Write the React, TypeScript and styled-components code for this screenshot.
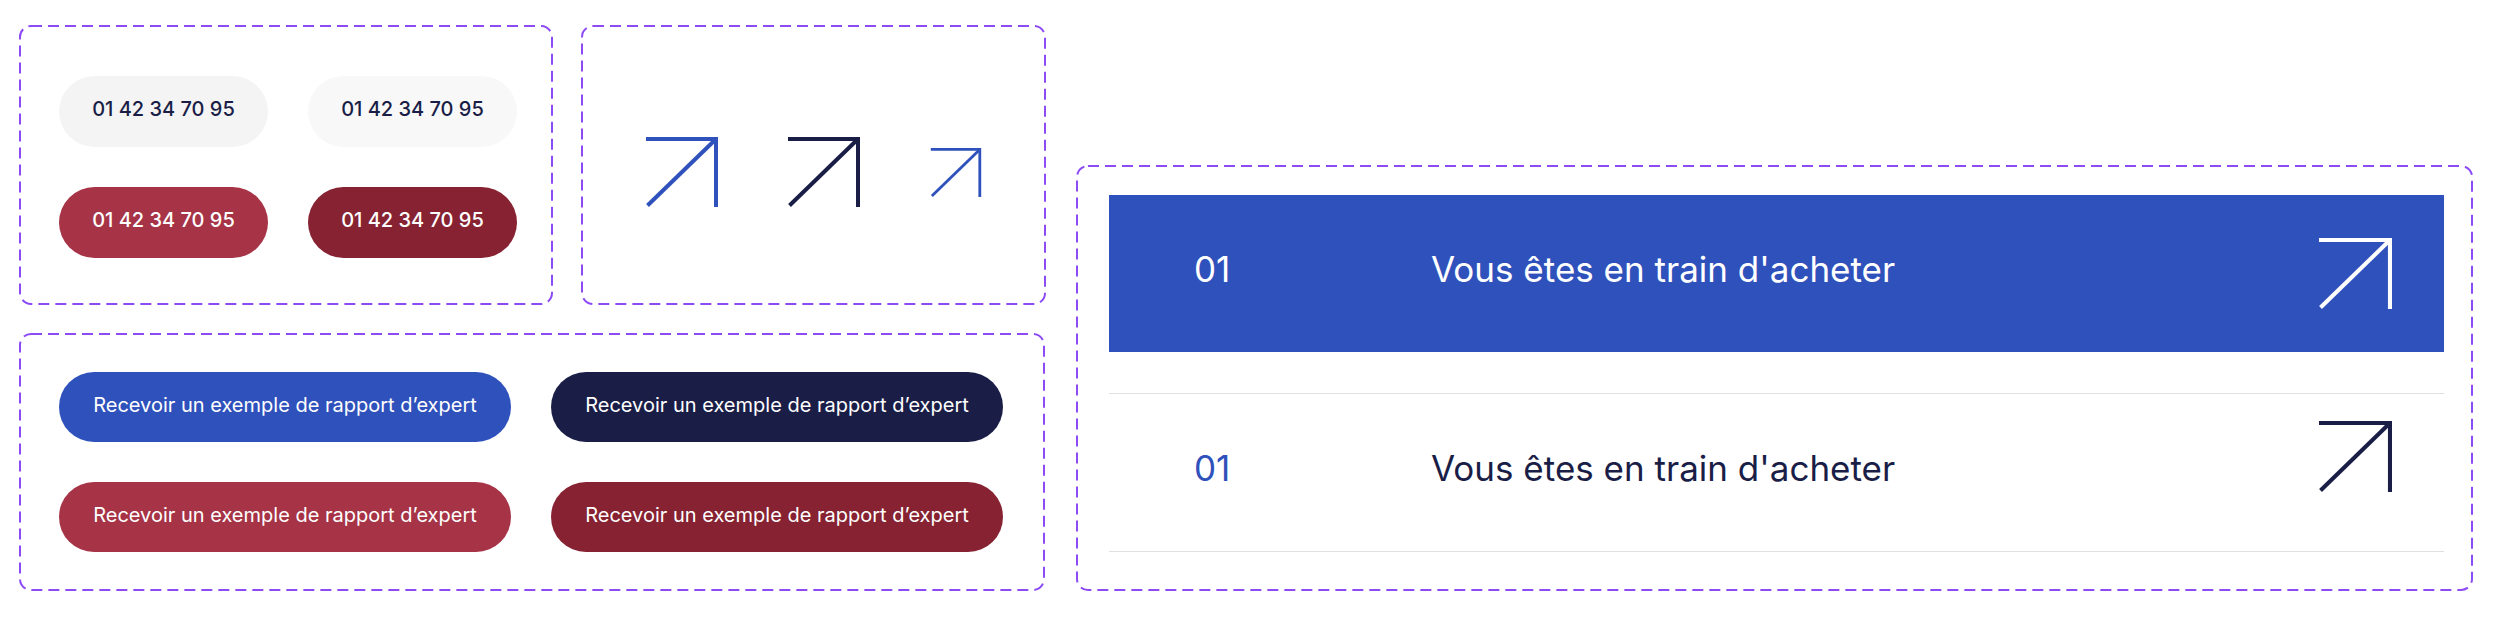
import styled, { createGlobalStyle } from "styled-components";
import type { ReactNode } from "react";

const GlobalStyle = createGlobalStyle`
  body {
    margin: 0;
    background: #ffffff;
    font-family: Inter, "Liberation Sans", sans-serif;
  }
`;

const blue = "#2f51bb";
const navy = "#1a1e47";
const red = "#a63346";
const darkRed = "#862231";

type ArrowProps = { width: number; height: number; color: string };

const ArrowIcon = ({ width, height, color }: ArrowProps) => (
  <svg width={width} height={height} viewBox="0 0 72 70" fill="none">
    <path d="M0 2H70V70" stroke={color} strokeWidth={4} strokeLinejoin="miter" />
    <path d="M1.5 68.5L70 2" stroke={color} strokeWidth={4} />
  </svg>
);

// figma-like dashed outline (css dashes are too short)
const DashedOutline = ({ w, h }: { w: number; h: number }) => (
  <OutlineSvg width={w} height={h}>
    <rect
      x={1}
      y={1}
      width={w - 2}
      height={h - 2}
      rx={11}
      fill="none"
      stroke="#8d4bf6"
      strokeWidth={2}
      strokeDasharray="11 6"
    />
  </OutlineSvg>
);

type FrameProps = { w: number; h: number; children: ReactNode };

const withOutline =
  (Box: typeof Frame) =>
  ({ w, h, children }: FrameProps) => (
    <Box $w={w} $h={h}>
      <DashedOutline w={w} h={h} />
      {children}
    </Box>
  );

export default function App() {
  const phones = [
    { bg: "#f4f4f4", fg: navy },
    { bg: "#f8f8f8", fg: navy },
    { bg: red, fg: "#ffffff" },
    { bg: darkRed, fg: "#ffffff" },
  ];
  const ctas = [blue, navy, red, darkRed];

  return (
    <>
      <GlobalStyle />
      <Page>
        <LeftColumn>
          <TopRow>
            <PhoneBox w={534} h={280}>
              {phones.map((p, i) => (
                <PhoneButton key={i} $bg={p.bg} $fg={p.fg}>
                  01 42 34 70 95
                </PhoneButton>
              ))}
            </PhoneBox>
            <ArrowBox w={465} h={280}>
              <ArrowIcon width={72} height={70} color={blue} />
              <ArrowIcon width={72} height={70} color={navy} />
              <ArrowIcon width={52} height={49} color={blue} />
            </ArrowBox>
          </TopRow>
          <CtaBox w={1026} h={258}>
            {ctas.map((c, i) => (
              <CtaButton key={i} $bg={c}>
                Recevoir un exemple de rapport d’expert
              </CtaButton>
            ))}
          </CtaBox>
        </LeftColumn>

        <ListBox w={1397} h={426}>
          <Row $active>
            <Num $active>01</Num>
            <Label $active>Vous êtes en train d'acheter</Label>
            <RowArrow $active>
              <ArrowIcon width={73} height={71} color="#ffffff" />
            </RowArrow>
          </Row>
          <Row>
            <Num>01</Num>
            <Label>Vous êtes en train d'acheter</Label>
            <RowArrow>
              <ArrowIcon width={73} height={71} color={navy} />
            </RowArrow>
          </Row>
        </ListBox>
      </Page>
    </>
  );
}

const Page = styled.div`
  display: flex;
  align-items: flex-end;
  gap: 30px;
  padding: 25px 0 0 19px;
`;

const LeftColumn = styled.div`
  display: flex;
  flex-direction: column;
  gap: 28px;
`;

const TopRow = styled.div`
  display: flex;
  gap: 28px;
`;

const Frame = styled.div<{ $w: number; $h: number }>`
  position: relative;
  box-sizing: border-box;
  width: ${(p) => p.$w}px;
  height: ${(p) => p.$h}px;
  border: 2px solid transparent;
`;

const OutlineSvg = styled.svg`
  position: absolute;
  left: -2px;
  top: -2px;
  pointer-events: none;
`;

const PhoneFrame = styled(Frame)`
  display: grid;
  grid-template-columns: 209px 209px;
  grid-auto-rows: 71px;
  gap: 40px;
  align-content: start;
  padding: 49px 0 0 38px;
`;

const ArrowFrame = styled(Frame)`
  display: flex;
  align-items: center;
  justify-content: center;
  gap: 70px;
  padding-top: 14px;
`;

const CtaFrame = styled(Frame)`
  display: grid;
  grid-template-columns: 452px 452px;
  grid-auto-rows: 70px;
  gap: 40px;
  padding: 37px 0 0 38px;
`;

const ListFrame = styled(Frame)`
  padding: 28px 27px 37px 31px;
  display: flex;
  flex-direction: column;
`;

const PhoneBox = withOutline(PhoneFrame);
const ArrowBox = withOutline(ArrowFrame);
const CtaBox = withOutline(CtaFrame);
const ListBox = withOutline(ListFrame);

const PhoneButton = styled.div<{ $bg: string; $fg: string }>`
  display: flex;
  align-items: center;
  justify-content: center;
  padding-bottom: 5px;
  box-sizing: border-box;
  border-radius: 36px;
  background: ${(p) => p.$bg};
  color: ${(p) => p.$fg};
  font-size: 20px;
  font-weight: 500;
`;

const CtaButton = styled.div<{ $bg: string }>`
  display: flex;
  align-items: center;
  justify-content: center;
  padding-bottom: 4px;
  box-sizing: border-box;
  border-radius: 35px;
  background: ${(p) => p.$bg};
  color: #ffffff;
  font-size: 20px;
`;

const Row = styled.div<{ $active?: boolean }>`
  height: 157px;
  display: grid;
  grid-template-columns: 237px 1fr auto;
  align-items: center;
  padding: 0 52px 0 85px;
  background: ${(p) => (p.$active ? blue : "transparent")};
  border-top: ${(p) => (p.$active ? "none" : "1px solid #e0e0e0")};
  border-bottom: ${(p) => (p.$active ? "none" : "1px solid #e0e0e0")};
  margin-bottom: ${(p) => (p.$active ? "41px" : "0")};
`;

const Num = styled.div<{ $active?: boolean }>`
  font-size: 35px;
  padding-bottom: 9px;
  color: ${(p) => (p.$active ? "#ffffff" : blue)};
`;

const Label = styled.div<{ $active?: boolean }>`
  font-size: 35px;
  padding-bottom: 9px;
  color: ${(p) => (p.$active ? "#ffffff" : navy)};
`;

const RowArrow = styled.div<{ $active?: boolean }>`
  display: flex;
  align-self: ${(p) => (p.$active ? "center" : "start")};
  margin-top: ${(p) => (p.$active ? "0" : "27px")};
`;
